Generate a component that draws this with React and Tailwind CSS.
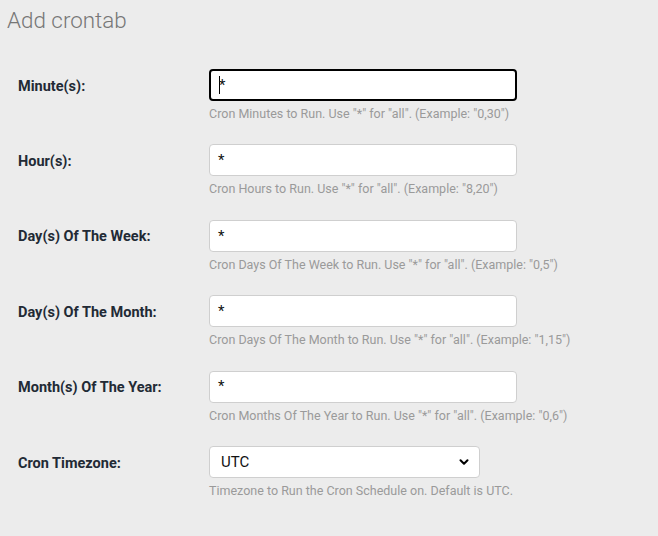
import { ChevronDown } from 'lucide-react';

const fields = [
    { label: 'Minute(s):', help: 'Cron Minutes to Run. Use "*" for "all". (Example: "0,30")', focused: true },
    { label: 'Hour(s):', help: 'Cron Hours to Run. Use "*" for "all". (Example: "8,20")' },
    { label: 'Day(s) Of The Week:', help: 'Cron Days Of The Week to Run. Use "*" for "all". (Example: "0,5")' },
    { label: 'Day(s) Of The Month:', help: 'Cron Days Of The Month to Run. Use "*" for "all". (Example: "1,15")' },
    { label: 'Month(s) Of The Year:', help: 'Cron Months Of The Year to Run. Use "*" for "all". (Example: "0,6")' },
];

const App = () => {
    return (
        <div className="min-h-[536px] w-[658px] bg-[#ececec] font-['Roboto',sans-serif] overflow-hidden">
            <h1 className="pl-[7px] pt-[5px] text-[22.4px] leading-[30px] font-light text-[#777]">Add crontab</h1>

            <div className="mt-[34px] flex flex-col gap-[22.4px] pl-[18px]">
                {fields.map((f) => (
                    <div key={f.label} className="flex">
                        <label className="w-[191px] h-8 pt-[3px] flex items-center text-[14.5px] font-bold text-[#222a35]">
                            {f.label}
                        </label>
                        <div className="flex flex-col">
                            <div
                                className={`w-[308px] h-8 rounded-[4px] bg-white flex items-center pl-[8px] text-[15px] text-[#111] ${
                                    f.focused ? 'border-2 border-black pl-[7px]' : 'border border-[#cfcfcf]'
                                }`}
                            >
                                {f.focused && <span className="w-px h-[18px] bg-black mr-[-1px]" />}
                                <span>*</span>
                            </div>
                            <p className="mt-[5px] text-[12.5px] leading-[16px] text-[#9a9a9a]">{f.help}</p>
                        </div>
                    </div>
                ))}

                <div className="flex">
                    <label className="w-[191px] h-8 pt-[3px] flex items-center text-[14.5px] font-bold text-[#222a35]">
                        Cron Timezone:
                    </label>
                    <div className="flex flex-col">
                        <div className="w-[271px] h-8 rounded-[4px] bg-white border border-[#cfcfcf] flex items-center justify-between pl-[11px] pr-[8px] text-[15px] text-[#111]">
                            <span>UTC</span>
                            <ChevronDown className="w-[14px] h-[14px] text-black" strokeWidth={3.5} />
                        </div>
                        <p className="mt-[5px] text-[12.5px] leading-[16px] text-[#9a9a9a]">
                            Timezone to Run the Cron Schedule on. Default is UTC.
                        </p>
                    </div>
                </div>
            </div>
        </div>
    );
};

export default App;
